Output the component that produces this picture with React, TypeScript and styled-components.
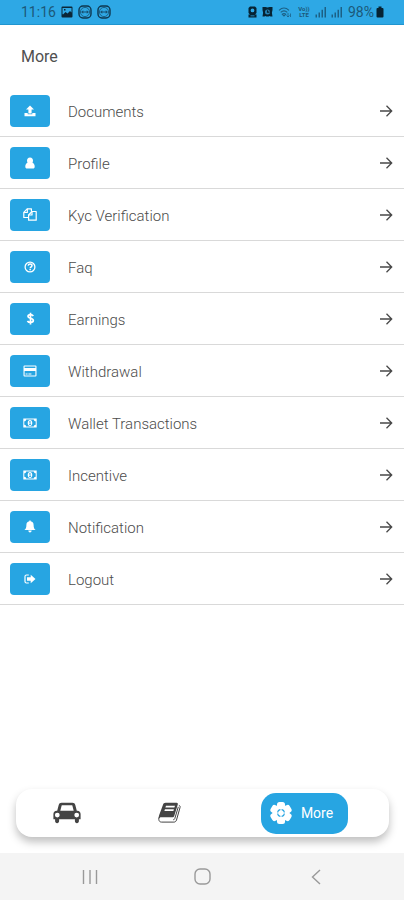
import React from "react";
import styled, { createGlobalStyle } from "styled-components";

const blue = "#27a5e2";

const GlobalStyle = createGlobalStyle`
  * { box-sizing: border-box; }
  body { margin: 0; background: #fff; font-family: Roboto, "Open Sans", sans-serif; }
  button { font: inherit; color: inherit; border: 0; padding: 0; background: none; cursor: pointer; }
  svg { display: block; flex: none; }
`;

const Screen = styled.div`
  min-height: 100vh;
  display: flex;
  flex-direction: column;
`;

const StatusBar = styled.header`
  height: 25px;
  padding: 0 20px 0 21px;
  display: flex;
  align-items: center;
  justify-content: space-between;
  background: #2ea8e5;
  border-bottom: 1px solid #2095cf;
  color: #1c5878;
  font-size: 14px;
`;

const StatusGroup = styled.div<{ $gap: number }>`
  display: flex;
  align-items: center;
  gap: ${(p) => p.$gap}px;
`;

const Title = styled.h1`
  margin: 0;
  height: 60px;
  padding: 2px 21px 0;
  display: flex;
  align-items: center;
  font-size: 16px;
  font-weight: 400;
  color: #505050;
`;

const Menu = styled.ul`
  list-style: none;
  margin: 0;
  padding: 0;
  flex: 1;
`;

const MenuItem = styled.li`
  border-bottom: 1px solid #d9d9d9;
`;

const MenuButton = styled.button`
  width: 100%;
  height: 51px;
  padding: 0 11px 0 10px;
  display: flex;
  align-items: center;
  gap: 18px;
  text-align: left;
`;

const IconTile = styled.span`
  width: 40px;
  height: 32px;
  flex: none;
  display: flex;
  align-items: center;
  justify-content: center;
  border-radius: 4px;
  background: ${blue};
  color: #fff;
`;

const Label = styled.span`
  flex: 1;
  font-size: 15px;
  font-weight: 300;
  line-height: 20px;
  padding-top: 2px;
  color: #4c4c4c;
`;

const TabBar = styled.nav`
  margin: 16px 15px 16px 16px;
  height: 48px;
  display: grid;
  grid-template-columns: 102fr 102fr 169fr;
  align-items: center;
  justify-items: center;
  border-radius: 16px;
  background: #fff;
  box-shadow: 0 5px 9px rgba(0, 0, 0, 0.25);
  color: #444;
`;

const Tab = styled.button<{ $active?: boolean }>`
  height: 41px;
  padding: 0 ${(p) => (p.$active ? 15 : 8)}px 0 8px;
  display: flex;
  align-items: center;
  gap: 8px;
  border-radius: 15px;
  font-size: 14px;
  ${(p) => p.$active && `background: ${blue}; color: #fff;`}
`;

const SystemBar = styled.footer`
  height: 47px;
  padding: 0 32px 0 34px;
  display: grid;
  grid-template-columns: repeat(3, 1fr);
  align-items: center;
  justify-items: center;
  background: #f4f4f4;
  color: #999;
`;

type GlyphProps = { w: number; h: number; box?: string; children: React.ReactNode };

const Glyph = ({ w, h, box, children }: GlyphProps) => (
  <svg width={w} height={h} viewBox={box ?? `0 0 ${w} ${h}`} fill="currentColor" aria-hidden="true">
    {children}
  </svg>
);

const UploadIcon = () => (
  <Glyph w={12} h={12}>
    <path d="M6 .5 10 4.600H7.600V8.400H4.400V4.600H2zM.5 8h3.200v1.200h4.600V8h3.200v3.200H.5z" />
  </Glyph>
);
const ProfileIcon = () => (
  <Glyph w={10} h={12}>
    <path d="M5 .5C7 .5 8 2 8 3.500c0 .9-.2 1.500-.6 2.100C8.900 6.500 9.700 8 9.700 9.700c0 1.200-.7 1.800-1.700 1.800H2C1 11.500.3 10.900.3 9.700.3 8 1.100 6.500 2.600 5.600 2.200 5 2 4.400 2 3.500 2 2 3 .5 5 .5z" />
  </Glyph>
);
const CopyIcon = () => (
  <Glyph w={14} h={13}>
    <g fill="none" stroke="currentColor" strokeWidth="1.200" strokeLinejoin="round">
      <path d="M5.400 9.500H.8V4.400L4.200.8h4.200v2.700" />
      <path d="M4.300.8v3.700H.8" />
      <path d="M9 3.500h4.200v8.700H5.600V7z" />
      <path d="M9 3.500V7H5.600" />
    </g>
  </Glyph>
);
const QuestionIcon = () => (
  <Glyph w={12} h={12}>
    <circle cx="6" cy="6" r="4.900" fill="none" stroke="currentColor" strokeWidth="1.300" />
    <path d="M4.200 4.700C4.400 3.500 5.200 3 6.100 3 7.200 3 8 3.700 8 4.600 8 5.800 6.200 5.800 6.200 7.200" fill="none" stroke="currentColor" strokeWidth="1.500" />
    <path d="M5.400 7.900h1.500v1.400H5.400z" />
  </Glyph>
);
const DollarIcon = () => (
  <Glyph w={9} h={13}>
    <path d="M7.300 4C6.600 3 5.600 2.700 4.400 2.700 3 2.700 2 3.300 2 4.400 2 6.800 7.300 5.700 7.300 8.500 7.300 9.800 6.100 10.400 4.600 10.400 3.200 10.400 2.100 9.900 1.400 8.900M4.500.7v11.700" fill="none" stroke="currentColor" strokeWidth="1.700" />
  </Glyph>
);
const CardIcon = () => (
  <Glyph w={14} h={12}>
    <path fillRule="evenodd" d="M1.500.5h11q1 0 1 1v9q0 1-1 1h-11q-1 0-1-1v-9q0-1 1-1zM1.600 1.600v1.500h10.800V1.600zM1.600 6v4.400h10.800V6zM2.600 8.500h2v1h-2zM5.400 8.500h3v1h-3z" />
  </Glyph>
);
const MoneyIcon = () => (
  <Glyph w={14} h={10}>
    <path fillRule="evenodd" d="M.3.500h13.400v9H.3zM3.200 1.500c0 1-.8 1.800-1.900 1.800v3.400c1.100 0 1.900.8 1.900 1.800h7.600c0-1 .8-1.800 1.900-1.800V3.300c-1.100 0-1.900-.8-1.900-1.800z" />
    <path fillRule="evenodd" d="M7 2c1.400 0 2.300 1.300 2.300 3S8.400 8 7 8 4.700 6.700 4.700 5 5.600 2 7 2zM6 3.900l.4.600.3-.2V6.200H6V7h2.100v-.8h-.6V3H6.800z" />
  </Glyph>
);
const BellIcon = () => (
  <Glyph w={12} h={13}>
    <path d="M5.300.5h1.400v.8C8.600 1.700 9.600 3 9.600 5c0 2.800.7 3.900 2 5H.4c1.300-1.100 2-2.200 2-5 0-2 1-3.300 2.900-3.700zM4.300 10.600h3.400c0 1-.7 1.800-1.700 1.800s-1.700-.8-1.700-1.800z" />
  </Glyph>
);
const LogoutIcon = () => (
  <Glyph w={12} h={10}>
    <path d="M4.800 1H2.500Q1 1 1 2.500v5Q1 9 2.500 9h2.300" fill="none" stroke="currentColor" strokeWidth="1.200" />
    <path d="M6.700.8 11.500 5 6.700 9.200V6.700H3V3.300h3.700z" />
  </Glyph>
);
const ArrowIcon = () => (
  <Glyph w={14} h={14}>
    <path d="M1 7h11.500M7.500 1.800 12.700 7 7.500 12.200" fill="none" stroke="#484848" strokeWidth="1.300" />
  </Glyph>
);
const CarIcon = () => (
  <Glyph w={28} h={22}>
    <path
      fillRule="evenodd"
      d="M8.600.8h10.800c1.600 0 2.500.8 2.900 2.200l1.500 5.800h.6c1.900 0 3.200 1.400 3.200 3.200v5.200h-1.700v1.900c0 1.300-.8 2.100-2 2.100s-2-.8-2-2.100v-1.900H6.100v1.900c0 1.300-.8 2.100-2 2.100s-2-.8-2-2.100v-1.900H.4V12c0-1.800 1.300-3.200 3.200-3.200h.6L5.700 3C6.100 1.600 7 .8 8.600.8zM7.300 8.800h13.400l-1.300-5.100c-.1-.3-.3-.4-.6-.4H9.200c-.3 0-.5.1-.6.400zM4.300 10.700a2.400 2.400 0 1 0 0 4.800 2.400 2.400 0 0 0 0-4.800zM23.700 10.700a2.400 2.400 0 1 0 0 4.800 2.400 2.400 0 0 0 0-4.800z"
    />
  </Glyph>
);
const BookIcon = () => (
  <Glyph w={23} h={22}>
    <path
      fillRule="evenodd"
      d="M7.600.8h11c1 0 1.500.7 1.200 1.700l-3.500 11.200c-.3 1-1 1.500-2 1.500H3c-.9 0-1.300.4-1.100 1.200l-1-.6c-.3-1 0-1.900.3-2.900L4.900 3C5.300 1.500 6.200.8 7.600.8zM8 3.700 7.400 5.600h9l.6-1.900zM6.900 7.200l-.5 1.700h9l.5-1.700z"
    />
    <path
      d="M20.900 3.300c1.100.5 1.500 1.100 1.100 2.300L18.500 18c-.4 1.400-1.300 2.100-2.600 2.100H3.500c-1.500 0-2.500-.9-2.700-2.700v-2M15.200 17.700c.8 0 1.300-.3 1.600-1.200l3.500-11.600"
      fill="none"
      stroke="currentColor"
      strokeWidth="1"
    />
  </Glyph>
);
const FlowerGearIcon = () => (
  <Glyph w={24} h={24}>
    {[0, 60, 120].map((angle) => (
      <rect key={angle} x="8" y="1" width="8" height="22" rx="2.500" transform={`rotate(${angle} 12 12)`} />
    ))}
    <circle cx="12" cy="12" r="8.500" />
    <circle cx="12" cy="12" r="3.300" fill="none" stroke={blue} strokeWidth="1.200" />
    <path d="M12 7.500v3M12 13.500v3M7.500 12h3M13.500 12h3" stroke="#fff" strokeWidth="1.200" />
  </Glyph>
);

const PictureIcon = () => (
  <Glyph w={12} h={12}>
    <path fill="#0b2738" fillRule="evenodd" d="M1.500.5h9q1 0 1 1v9q0 1-1 1h-9q-1 0-1-1v-9q0-1 1-1zM2 8.500 4.500 6l2 1.500L9 5l1.500 1.500V2h-9v6zM3 3h1.500v1.500H3z" />
  </Glyph>
);
const ViewerIcon = () => (
  <Glyph w={14} h={14}>
    <rect x="1" y="1" width="12" height="12" rx="4" fill="none" stroke="#0e3750" strokeWidth="1.400" />
    <circle cx="7" cy="7" r="4.600" fill="none" stroke="#1c6288" strokeWidth="1" />
    <path d="M3 7l2.300-1.700v1.200h3.400V5.300L11 7 8.700 8.700V7.500H5.300v1.200z" fill="#174f70" />
  </Glyph>
);
const LocationIcon = () => (
  <Glyph w={9} h={12}>
    <path fill="#062333" fillRule="evenodd" d="M2 .5h5L8.500 2v5L7 8.500h1.500v3h-8v-3H2L.5 7V2zM4.500 2.500a1.900 1.900 0 1 0 0 3.800 1.900 1.900 0 0 0 0-3.800zM2.500 9.500v.8h4v-.8z" />
  </Glyph>
);
const AlarmIcon = () => (
  <Glyph w={11} h={12}>
    <path fill="#062333" d="M.5 1h3l2 .6L7.500 1h3v3l-.6 2.700.6 3.800h-2l-.8-.6q-2.200 1-4.400 0l-.8.600h-2L1.100 6.700.5 4z" />
    <circle cx="5.500" cy="6" r="2.500" fill="#2585b8" />
    <path d="M5.500 4.200v2h2" fill="none" stroke="#062333" strokeWidth="1.200" />
  </Glyph>
);
const WifiIcon = () => (
  <Glyph w={14} h={12}>
    <path d="M1 4.300q5-4.600 10 0M2.700 6.300q3.300-3 6.600 0M4.300 8.200q1.700-1.500 3.400 0L6 10z" fill="none" stroke="#1c6085" strokeWidth="1.100" />
    <path d="M10 7v4M8.500 9.500 10 11l1.500-1.500M12.500 11V7.500" fill="none" stroke="#1c6085" strokeWidth=".8" />
  </Glyph>
);
const SignalIcon = () => (
  <Glyph w={12} h={12}>
    <path d="M.5 8.500H2v3H.5zM3.500 6.500H5v5H3.500zM6.500 3.800H8v7.700H6.500zM9.500 1H11v10.500H9.500z" fill="#1c6085" />
  </Glyph>
);
const BatteryIcon = () => (
  <Glyph w={8} h={12}>
    <path d="M2.500.5h3V2h1q1 0 1 1v7.500q0 1-1 1h-5q-1 0-1-1V3q0-1 1-1h1z" fill="#062333" />
  </Glyph>
);

const VolteBadge = styled.span`
  width: 14px;
  display: flex;
  flex-direction: column;
  align-items: center;
  font-size: 6px;
  font-weight: 700;
  line-height: 6px;
`;

const items = [
  { label: "Documents", Icon: UploadIcon },
  { label: "Profile", Icon: ProfileIcon },
  { label: "Kyc Verification", Icon: CopyIcon },
  { label: "Faq", Icon: QuestionIcon },
  { label: "Earnings", Icon: DollarIcon },
  { label: "Withdrawal", Icon: CardIcon },
  { label: "Wallet Transactions", Icon: MoneyIcon },
  { label: "Incentive", Icon: MoneyIcon },
  { label: "Notification", Icon: BellIcon },
  { label: "Logout", Icon: LogoutIcon },
];

export default function App() {
  return (
    <Screen>
      <GlobalStyle />
      <StatusBar>
        <StatusGroup $gap={5}>
          <span>11:16</span>
          <PictureIcon />
          <ViewerIcon />
          <ViewerIcon />
        </StatusGroup>
        <StatusGroup $gap={5}>
          <LocationIcon />
          <AlarmIcon />
          <WifiIcon />
          <StatusGroup $gap={4}>
            <VolteBadge>
              <span>Vo))</span>
              <span>LTE</span>
            </VolteBadge>
            <SignalIcon />
            <SignalIcon />
          </StatusGroup>
          <StatusGroup $gap={2}>
            <span>98%</span>
            <BatteryIcon />
          </StatusGroup>
        </StatusGroup>
      </StatusBar>
      <Title>More</Title>
      <Menu>
        {items.map(({ label, Icon }) => (
          <MenuItem key={label}>
            <MenuButton type="button">
              <IconTile>
                <Icon />
              </IconTile>
              <Label>{label}</Label>
              <ArrowIcon />
            </MenuButton>
          </MenuItem>
        ))}
      </Menu>
      <TabBar aria-label="Main">
        <Tab type="button" aria-label="Rides">
          <CarIcon />
        </Tab>
        <Tab type="button" aria-label="Bookings">
          <BookIcon />
        </Tab>
        <Tab type="button" $active aria-current="page">
          <FlowerGearIcon />
          More
        </Tab>
      </TabBar>
      <SystemBar>
        <button type="button" aria-label="Recent apps">
          <Glyph w={16} h={16}>
            <path d="M1.500 1v14M8 1v14M14.500 1v14" stroke="currentColor" strokeWidth="1.400" />
          </Glyph>
        </button>
        <button type="button" aria-label="Home">
          <Glyph w={17} h={17}>
            <rect x="1" y="1" width="15" height="15" rx="5" fill="none" stroke="currentColor" strokeWidth="1.400" />
          </Glyph>
        </button>
        <button type="button" aria-label="Back">
          <Glyph w={10} h={16}>
            <path d="M9 1 1.500 8 9 15" fill="none" stroke="currentColor" strokeWidth="1.400" />
          </Glyph>
        </button>
      </SystemBar>
    </Screen>
  );
}
